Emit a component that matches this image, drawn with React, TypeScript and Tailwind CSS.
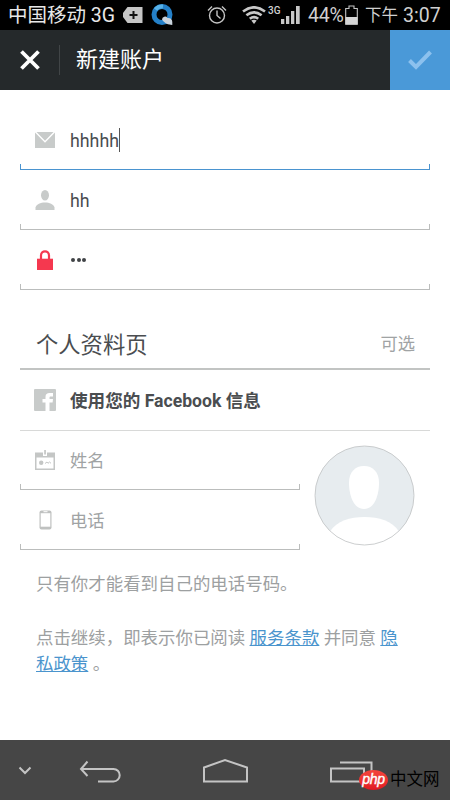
import type { ReactNode } from 'react';

const MailIcon = () => (
  <svg className="w-5 h-4" viewBox="0 0 20 16" fill="#c8cbca">
    <path d="M1.5 0h17L10 8.8zM0 .4l10 10.300L20 .4V16H0z" />
  </svg>
);

const UserIcon = () => (
  <svg className="w-5 h-5" viewBox="0 0 20 20" fill="#c8cbca">
    <ellipse cx="10" cy="5.3" rx="4" ry="5.3" />
    <path d="M.5 20v-2.5C1.5 14 5.500 12.500 10 12.500s8.500 1.500 9.500 5V20z" />
  </svg>
);

const LockIcon = () => (
  <svg className="w-4 h-5" viewBox="0 0 16 20">
    <path d="M4 10V5.500C4 0 12 0 12 5.500V10" fill="none" stroke="#f5384f" strokeWidth="2.200" />
    <path d="M0 8.700h16V20H0z" fill="#f5384f" />
  </svg>
);

const FacebookIcon = () => (
  <svg className="w-[22px] h-[22px]" viewBox="0 0 22 22">
    <rect width="22" height="22" rx="1" fill="#c8cbca" />
    <path d="M11.500 22v-8.500H8.500V10h3V8c0-3 1.500-4 4-4H19v3.500h-2.200c-1 0-1.300.3-1.300 1.200V10H19l-.4 3.500h-3.100V22z" fill="#fff" />
  </svg>
);

const BadgeIcon = () => (
  <svg className="w-5 h-5" viewBox="0 0 20 20" fill="#c4c6c5">
    <path d="M0 2.500h8V6h4V2.500h8V20H0zM1.500 7.500v11h17v-11z" fillRule="evenodd" />
    <path d="M9.200 0h1.700v4.500H9.200z" />
    <circle cx="6.200" cy="12.700" r="2.200" />
    <path d="M10 13.500l2-1.500 1 1.300 1.500-1.300 1.500 1.300" fill="none" stroke="#c4c6c5" />
  </svg>
);

const PhoneIcon = () => (
  <svg className="w-[13px] h-5" viewBox="0 0 13 20">
    <rect x=".5" y=".5" width="12" height="19" rx="2" fill="#bfc1c0" />
    <path d="M1.700 3.200h9.600v13.500H1.700z" fill="#fff" />
    <path d="M4.500 1.700h4" stroke="#fff" />
  </svg>
);

const StatusBar = () => (
  <div className="flex h-[30px] items-center bg-black pl-2 text-[#d0d0d0]">
    <span className="w-[110px] whitespace-nowrap pt-[2px] text-[19.5px] leading-[28px] text-[#e8e8e8]">中国移动 3G</span>
    <svg className="ml-[4px] h-[18px] w-[21px]" viewBox="0 0 21 18">
      <path d="M5.500 1H20.500V17H5.500L1 11V7z" fill="#c6c6c6" />
      <path d="M11.500 5v8M7.500 9h8" stroke="#111" strokeWidth="2" />
    </svg>
    <svg className="ml-[8px] h-[22px] w-[22px]" viewBox="0 0 22 22">
      <circle cx="11" cy="10.500" r="8" fill="none" stroke="#2480c8" strokeWidth="5" />
      <path d="M4.500 5.500A8 8 0 0 1 12 2.500" fill="none" stroke="#58b2e8" strokeWidth="4" />
      <path d="M11 15.500a3 3 0 0 1 5.500-1.500 4 4 0 0 1 4.800 4V21c-4-.2-7.500-1.500-10.300-5.500z" fill="#c9d3dc" />
    </svg>
    <svg className="ml-[34px] h-[20px] w-[20px]" viewBox="0 0 20 20" fill="none" stroke="#c4c4c4" strokeWidth="1.400">
      <circle cx="10" cy="10.500" r="7.500" />
      <path d="M10 5.500v5l3.500 3M1 5.500L5 1.500M15 1.500l4 4" />
    </svg>
    <svg className="ml-[15px] h-[18px] w-6" viewBox="0 0 24 18" fill="none" stroke="#c8c8c8" strokeWidth="2.700">
      <path d="M1 5.500Q12-2.800 23 5.500M4.400 9.200Q12 3.400 19.600 9.200M7.800 12.700Q12 9.500 16.200 12.700" />
      <path d="M9.300 14.500Q12 12.800 14.700 14.500L12 18z" fill="#c8c8c8" stroke="none" />
    </svg>
    <span className="-mt-[9px] ml-[2px] w-[12px] text-[10px] font-medium leading-none">3G</span>
    <svg className="ml-[1px] h-[18px] w-[19px]" viewBox="0 0 19 18" fill="#c8c8c8">
      <path d="M0 13h3.300v5H0zM5 10h3.300v8H5zM10 5h3.300v13H10zM15 0h3.700v18H15z" />
    </svg>
    <span className="ml-[8px] w-[37px] whitespace-nowrap pt-[2px] text-[19.5px] leading-[28px] tracking-[-0.2px]">44%</span>
    <svg className="h-5 w-[13px]" viewBox="0 0 13 20">
      <path d="M.7 3.500H4V1h5v2.500h3.300v15.800H.7z" fill="none" stroke="#c4c4c4" strokeWidth="1.100" />
      <path d="M.5 12h12v7.500H.5z" fill="#d5d5d5" />
    </svg>
    <span className="ml-[7px] whitespace-nowrap pt-[2px] text-[16.5px] leading-[28px]">下午</span>
    <span className="ml-[5px] pt-[2px] text-[19.5px] leading-[28px]">3:07</span>
  </div>
);

const Header = () => (
  <header className="flex h-[60px] items-center bg-[#25292b]">
    <svg className="ml-5 h-5 w-5" viewBox="0 0 20 20" stroke="#fff" strokeWidth="3.800">
      <path d="M1.500 1.500l17 17M18.500 1.500l-17 17" />
    </svg>
    <div className="ml-[19px] h-[30px] w-px bg-[#414547]" />
    <h1 className="ml-4 text-[22px] leading-[60px] text-white">新建账户</h1>
    <button className="ml-auto flex h-[60px] w-[60px] items-center justify-center bg-[#4a99d8]">
      <svg className="h-5 w-6" viewBox="0 0 24 20" fill="none" stroke="#8cc1ee" strokeWidth="4">
        <path d="M1.500 10.500L8 17 22.500 2" />
      </svg>
    </button>
  </header>
);

type FieldProps = {
  icon: ReactNode;
  children: ReactNode;
  active?: boolean;
};

const Field = ({ icon, children, active }: FieldProps) => (
  <div className="flex h-[60px] flex-col">
    <div className="flex h-[54px] items-center pt-[6px]">
      <div className="flex w-[50px] justify-center">{icon}</div>
      {children}
    </div>
    <div className={active ? 'h-[6px] border-x border-b border-[#4a94d0]' : 'h-[6px] border-x border-b border-[#bbbdbc]'} />
  </div>
);

const NavBar = () => (
  <nav className="relative h-[60px] bg-[#464646]">
    <svg className="h-[60px] w-[450px]" viewBox="0 0 450 60" fill="none" stroke="#c4c4c4" strokeWidth="2">
      <path d="M19.500 27.500l5.500 5.500 5.500-5.500" />
      <path d="M87.500 21.500L81 29l6.500 7M81 29h32.500a6.200 6.200 0 0 1 0 12.400H98" />
      <path d="M204 41.500V27.500L225 20l22 7.500v14z" />
      <path d="M340 22.500h31.500V41M331 28.500h33v13h-33z" />
    </svg>
    <div className="absolute left-[359px] top-[30px] flex h-5 w-[29px] items-center justify-center rounded-[50%] bg-[#e9252b] bg-linear-to-b from-[#f4443c] to-[#e01822]">
      <span className="-mt-[3px] font-['Liberation_Sans'] text-[14px] font-normal italic leading-none tracking-[-0.3px] text-white [-webkit-text-stroke:0.4px_white]">php</span>
    </div>
    <span className="absolute left-[390px] top-[28px] whitespace-nowrap text-[16.5px] leading-[24px] text-black">中文网</span>
  </nav>
);

const App = () => {
  return (
    <div className="flex h-[800px] w-[450px] flex-col overflow-hidden bg-white font-[Roboto,'Noto_Sans_CJK_SC',sans-serif] font-normal text-[#4a4d50]">
      <StatusBar />
      <Header />
      <main className="flex-1 px-5 pt-5">
        <Field icon={<MailIcon />} active>
          <span className="pt-[2px] text-[17.800px]">hhhhh</span>
          <span className="h-6 w-px bg-[#555]" />
        </Field>
        <Field icon={<UserIcon />}>
          <span className="pt-[2px] text-[17.800px]">hh</span>
        </Field>
        <Field icon={<LockIcon />}>
          <div className="flex gap-[1.500px] pl-[1px]">
            {[0, 1, 2].map((dot) => (
              <span key={dot} className="h-1 w-1 rounded-full bg-[#404346]" />
            ))}
          </div>
        </Field>

        <div className="mt-[30px] flex h-[50px] items-center justify-between border-b-2 border-[#c2c4c3] pl-4 pr-[15px]">
          <h2 className="pt-[3px] text-[22.300px]">个人资料页</h2>
          <span className="pt-[2px] text-[17.300px] text-[#a0a3a4]">可选</span>
        </div>
        <div className="flex h-[61px] items-center border-b border-[#d8d9d8]">
          <div className="flex w-[50px] justify-center"><FacebookIcon /></div>
          <span className="pt-[2px] text-[17.600px] font-bold">使用您的 Facebook 信息</span>
        </div>

        <div className="flex justify-between">
          <div className="-mt-[1px] w-[280px] text-[17.300px] text-[#a0a3a4]">
            <Field icon={<BadgeIcon />}>
              <span className="pt-1">姓名</span>
            </Field>
            <Field icon={<PhoneIcon />}>
              <span className="pt-1">电话</span>
            </Field>
          </div>
          <svg className="mr-[15px] mt-[14px] h-[101px] w-[101px]" viewBox="0 0 101 101">
            <circle cx="50.500" cy="50.500" r="49.500" fill="#e7ecef" />
            <path d="M50 21c9 0 15 6 15 17s-4 26-15 26-15-15-15-26 6-17 15-17z" fill="#fff" />
            <path d="M16 86.500C23 76 36 72 50.500 72S78 76 85 86.500A49.500 49.500 0 0 1 16 86.500z" fill="#fff" />
            <circle cx="50.500" cy="50.500" r="49.500" fill="none" stroke="#bfc2c3" strokeWidth=".8" />
          </svg>
        </div>

        <div className="whitespace-nowrap pl-4 text-[17.450px] leading-[26px] text-[#9da0a1]">
          <p className="mt-[21px]">只有你才能看到自己的电话号码。</p>
          <p className="mt-7">
            点击继续，即表示你已阅读 <a className="text-[#4a94cd] underline">服务条款</a> 并同意 <a className="text-[#4a94cd] underline">隐<br />私政策</a> 。
          </p>
        </div>
      </main>
      <NavBar />
    </div>
  );
};

export default App;
